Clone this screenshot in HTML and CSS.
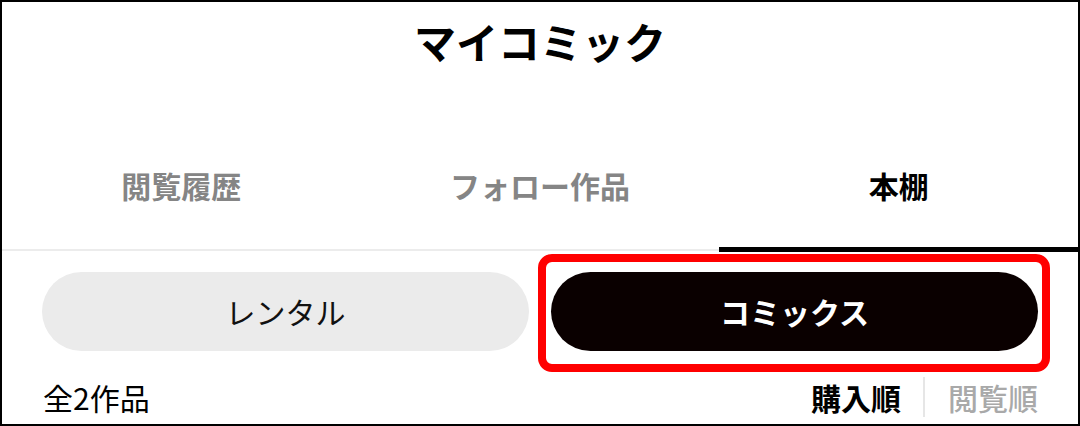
FILE: index.html
```html
<!DOCTYPE html>
<html lang="ja">
<head>
<meta charset="utf-8">
<link rel="stylesheet" href="styles.css">
</head>
<body>
<div class="screen">
  <header class="header">
    <h1 class="title">マイコミック</h1>
  </header>
  <nav class="tabs">
    <div class="tab">閲覧履歴</div>
    <div class="tab">フォロー作品</div>
    <div class="tab tab-active">本棚</div>
  </nav>
  <div class="segments">
    <div class="pill">レンタル</div>
    <div class="pill pill-active">コミックス<span class="highlight"></span></div>
  </div>
  <div class="listbar">
    <div class="count">全2作品</div>
    <div class="sort">
      <span class="sort-item sort-on">購入順</span>
      <span class="sort-div"></span>
      <span class="sort-item sort-off">閲覧順</span>
    </div>
  </div>
</div>
</body>
</html>
```
FILE: styles.css
```css
* { box-sizing: border-box; margin: 0; padding: 0; }
html, body { width: 1080px; height: 426px; overflow: hidden; background: #fff; }
body {
  font-family: "Noto Sans CJK JP", "Noto Sans", sans-serif;
  color: #000;
}
.screen {
  width: 1080px;
  height: 426px;
  border: 2px solid #000;
  display: flex;
  flex-direction: column;
}
.header {
  height: 77px;
  display: flex;
  align-items: center;
  justify-content: center;
}
.title {
  font-size: 42px;
  font-weight: 700;
  line-height: 48px;
}
.tabs {
  display: flex;
  border-bottom: 2px solid #ececec;
}
.tab {
  flex: 1;
  position: relative;
  text-align: center;
  font-size: 30px;
  font-weight: 700;
  line-height: 40px;
  padding: 86px 0 44px;
  color: #858585;
}
.tab-active { color: #000; }
.tab-active::after {
  content: "";
  position: absolute;
  left: 0;
  right: -2px;
  bottom: -3px;
  height: 5px;
  background: #000;
}
.segments {
  display: flex;
  gap: 22px;
  padding: 0 40px;
  margin-top: 21px;
}
.pill {
  flex: 1;
  height: 79px;
  border-radius: 40px;
  background: #ebebeb;
  display: flex;
  align-items: center;
  justify-content: center;
  font-size: 30px;
  font-weight: 400;
  color: #111;
  position: relative;
  padding-bottom: 2px;
}
.pill-active {
  background: #0a0000;
  color: #fff;
  font-weight: 700;
}
.highlight {
  position: absolute;
  top: -18px;
  left: -13px;
  right: -12px;
  bottom: -21px;
  border: 8px solid #ff0000;
  border-radius: 14px;
}
.listbar {
  display: flex;
  justify-content: space-between;
  align-items: center;
  margin-top: 26px;
  padding: 0 40px 0 41px;
  height: 40px;
}
.count {
  font-size: 30px;
  font-weight: 400;
  line-height: 40px;
}
.sort {
  display: flex;
  align-items: stretch;
  height: 40px;
}
.sort-item {
  font-size: 30px;
  line-height: 40px;
}
.sort-on { font-weight: 700; color: #000; }
.sort-off { font-weight: 500; color: #a9a9a9; }
.sort-div {
  width: 2px;
  background: #e6e6e6;
  margin: 0 23px 0 22px;
}
```
